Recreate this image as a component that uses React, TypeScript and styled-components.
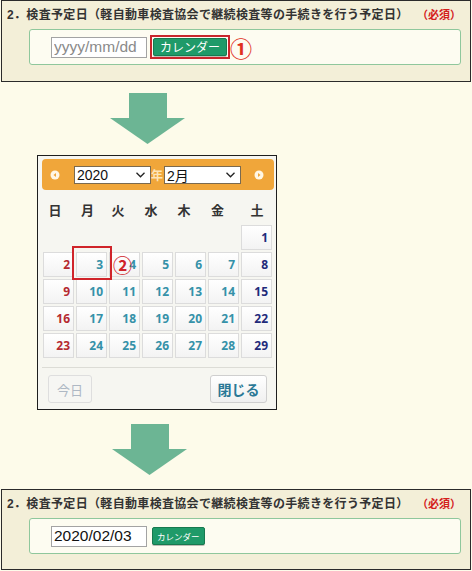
import React from "react"
import styled, { createGlobalStyle } from "styled-components"

const GlobalStyle = createGlobalStyle`
  html, body {
    margin: 0;
    padding: 0;
    background: #fdfbea;
  }
  body {
    font-family: "Liberation Sans", "Noto Sans CJK JP", sans-serif;
    color: #333;
  }
`

const WEEKDAYS = ["日", "月", "火", "水", "木", "金", "土"]

// Feb 2020 starts on a Saturday
const days: (number | null)[] = [
  ...Array(6).fill(null),
  ...Array.from({ length: 29 }, (_, i) => i + 1),
]

const ArrowDown: React.FC = () => (
  <svg width="75" height="51" viewBox="0 0 75 51">
    <rect x="19" y="0" width="38" height="26" fill="#6cb594" />
    <polygon points="0,25 75,25 37.5,51" fill="#6cb594" />
  </svg>
)

const NavIcon: React.FC<{ dir: "prev" | "next" }> = ({ dir }) => (
  <NavSvg width="10" height="10" viewBox="0 0 10 10">
    <circle cx="5" cy="5" r="4.5" fill="#fff7e6" />
    {dir === "prev" ? (
      <polygon points="6,3 3.5,5 6,7" fill="#f0a63a" />
    ) : (
      <polygon points="4,3 6.5,5 4,7" fill="#f0a63a" />
    )}
  </NavSvg>
)

const Chevron: React.FC = () => (
  <svg width="9" height="6" viewBox="0 0 9 6">
    <polyline points="0.5,0.8 4.5,4.8 8.5,0.8" fill="none" stroke="#222" strokeWidth="1.3" />
  </svg>
)

const DateField: React.FC<{ value?: string; highlight?: boolean }> = ({ value, highlight }) => (
  <Field>
    <DateInput readOnly placeholder="yyyy/mm/dd" value={value ?? ""} />
    {highlight ? (
      <>
        <Highlight>
          <CalButton>カレンダー</CalButton>
        </Highlight>
        <StepMark>①</StepMark>
      </>
    ) : (
      <CalButton $small>カレンダー</CalButton>
    )}
  </Field>
)

const Section: React.FC<{ value?: string; highlight?: boolean; $height: number }> = ({
  value,
  highlight,
  $height,
}) => (
  <Panel $height={$height}>
    <Title>
      2．検査予定日（軽自動車検査協会で継続検査等の手続きを行う予定日）
      <Required>（必須）</Required>
    </Title>
    <DateField value={value} highlight={highlight} />
  </Panel>
)

const App: React.FC = () => {
  return (
    <Page>
      <GlobalStyle />
      <Section highlight $height={82} />

      <ArrowRow $height={73} $left={110}>
        <ArrowDown />
      </ArrowRow>

      <Calendar>
        <CalHeader>
          <NavIcon dir="prev" />
          <FakeSelect $first>
            <span>2020</span>
            <Chevron />
          </FakeSelect>
          <YearLabel>年</YearLabel>
          <FakeSelect>
            <span>2月</span>
            <Chevron />
          </FakeSelect>
          <NavIcon dir="next" />
        </CalHeader>

        <WeekRow>
          {WEEKDAYS.map((w) => (
            <WeekCell key={w}>{w}</WeekCell>
          ))}
        </WeekRow>

        <DayGrid>
          {days.map((d, i) =>
            d === null ? (
              <span key={`e-${i}`} />
            ) : (
              <DayCell key={d} $col={i % 7}>
                {d}
              </DayCell>
            )
          )}
        </DayGrid>

        <CalFooter>
          <TodayButton>今日</TodayButton>
          <CloseButton>閉じる</CloseButton>
        </CalFooter>

        <DayMarker />
        <DayStep>②</DayStep>
      </Calendar>

      <ArrowRow $height={79} $left={112}>
        <ArrowDown />
      </ArrowRow>

      <Section value="2020/02/03" $height={81} />
    </Page>
  )
}

const Page = styled.div`
  width: 472px;
  height: 571px;
  overflow: hidden;
  display: flex;
  flex-direction: column;
`

const Panel = styled.section<{ $height: number }>`
  box-sizing: border-box;
  width: 470px;
  height: ${(p) => p.$height}px;
  margin-left: 1px;
  border: 1px solid #2b2b2b;
  background: #f3efd8;
  padding-top: 6px;
`

const Title = styled.h2`
  margin: 0 0 6px 5px;
  font-size: 12px;
  line-height: 16px;
  letter-spacing: 0.33px;
  font-weight: bold;
  color: #333;
  white-space: nowrap;
`

const Required = styled.span`
  margin-left: 14px;
  font-size: 11px;
  letter-spacing: 0;
  color: #d4201c;
`

const Field = styled.div`
  box-sizing: border-box;
  width: 432px;
  height: 36px;
  margin-left: 27px;
  border: 1px solid #8fc79c;
  border-radius: 3px;
  background: #fdfcf1;
  display: flex;
  align-items: center;
  padding-left: 21px;
`

const DateInput = styled.input`
  box-sizing: border-box;
  width: 96px;
  height: 21px;
  margin: 0;
  padding: 0 2px;
  border: 1px solid #a3a3a3;
  background: #fff;
  font-family: "Liberation Sans", sans-serif;
  font-size: 15.5px;
  color: #111;
  outline: none;
  &::placeholder {
    color: #8a8a8a;
  }
`

const Highlight = styled.div`
  margin-left: 3px;
  border: 2px solid #c9252b;
  padding: 1px;
  display: flex;
`

const CalButton = styled.button<{ $small?: boolean }>`
  box-sizing: border-box;
  height: 18px;
  margin: 0 0 0 ${(p) => (p.$small ? 5 : 0)}px;
  padding: 0 ${(p) => (p.$small ? 4 : 6)}px;
  border: 1px solid #17794f;
  border-radius: 2px;
  background: #1f9a69;
  color: #fff;
  font-family: "Noto Sans CJK JP", sans-serif;
  font-size: ${(p) => (p.$small ? 8.5 : 12)}px;
  line-height: 16px;
  box-shadow: 0 1px 0 rgba(0, 0, 0, 0.25);
`

const StepMark = styled.span`
  margin-left: 0;
  font-family: "Noto Sans CJK JP", sans-serif;
  font-size: 22px;
  font-weight: bold;
  line-height: 1;
  color: #e0301e;
`

const ArrowRow = styled.div<{ $height: number; $left: number }>`
  height: ${(p) => p.$height}px;
  display: flex;
  align-items: center;
  padding-left: ${(p) => p.$left}px;
`

const Calendar = styled.div`
  position: relative;
  box-sizing: border-box;
  width: 240px;
  height: 255px;
  margin-left: 37px;
  border: 1px solid #1e1e1e;
  background: #f6f6f1;
  padding: 3px 3px 0 4px;
`

const CalHeader = styled.div`
  width: 232px;
  height: 31px;
  border-radius: 4px;
  background: #f0a63a;
  display: flex;
  align-items: center;
`

const NavSvg = styled.svg`
  flex: none;
  margin: 0 13px 0 8px;
  &:last-child {
    margin: 0 0 0 13px;
  }
`

const FakeSelect = styled.div<{ $first?: boolean }>`
  box-sizing: border-box;
  width: 77px;
  height: 18px;
  margin-left: ${(p) => (p.$first ? 1 : 0)}px;
  border: 1px solid #7a6a50;
  background: #fff;
  display: flex;
  align-items: center;
  justify-content: space-between;
  padding: 0 5px 0 2px;
  font-family: "Liberation Sans", "Noto Sans CJK JP", sans-serif;
  font-size: 14px;
  color: #111;
`

const YearLabel = styled.span`
  width: 13px;
  font-size: 12px;
  font-weight: bold;
  color: #fde4b8;
  font-family: "Noto Sans CJK JP", sans-serif;
`

const WeekRow = styled.div`
  display: grid;
  grid-template-columns: 26px 39px 22px 44px 22px 45px 34px;
  height: 30px;
  margin-top: 4px;
  align-items: center;
`

const WeekCell = styled.span`
  text-align: center;
  font-family: "Noto Sans CJK JP", sans-serif;
  font-size: 13px;
  font-weight: bold;
  color: #333;
`

const dayColor = (col: number) => (col === 0 ? "#b52a30" : col === 6 ? "#1f2a7a" : "#3591a8")

const DayGrid = styled.div`
  display: grid;
  grid-template-columns: repeat(7, 31px);
  grid-auto-rows: 25px;
  column-gap: 2px;
  row-gap: 2px;
  margin: 1px 0 0 1px;
`

const DayCell = styled.span<{ $col: number }>`
  box-sizing: border-box;
  border: 1px solid #dcdcdc;
  background: linear-gradient(#ffffff, #f3f3f3);
  display: flex;
  align-items: center;
  justify-content: flex-end;
  padding-right: 3px;
  font-family: "Open Sans", sans-serif;
  font-size: 12px;
  font-weight: bold;
  color: ${(p) => dayColor(p.$col)};
`

const CalFooter = styled.div`
  width: 232px;
  box-sizing: border-box;
  margin-top: 9px;
  border-top: 1px solid #dcdcd6;
  padding: 7px 7px 0 6px;
  display: flex;
  justify-content: space-between;
`

const FooterButton = styled.button`
  box-sizing: border-box;
  height: 28px;
  margin: 0;
  padding: 0;
  border-radius: 3px;
  font-family: "Noto Sans CJK JP", sans-serif;
`

const TodayButton = styled(FooterButton)`
  width: 44px;
  border: 1px solid #dedede;
  background: #f6f6f3;
  color: #aeb8c4;
  font-size: 13px;
`

const CloseButton = styled(FooterButton)`
  width: 57px;
  border: 1px solid #cfcfcf;
  background: linear-gradient(#ffffff, #f0f0f0);
  color: #2a7896;
  font-size: 14px;
  font-weight: bold;
`

const DayMarker = styled.div`
  position: absolute;
  left: 34px;
  top: 90px;
  width: 40px;
  height: 34px;
  box-sizing: border-box;
  border: 2px solid #d0242a;
`

const DayStep = styled.span`
  position: absolute;
  left: 75px;
  top: 99px;
  font-family: "Noto Sans CJK JP", sans-serif;
  font-size: 19px;
  font-weight: bold;
  line-height: 19px;
  color: #d0242a;
`

export default App
